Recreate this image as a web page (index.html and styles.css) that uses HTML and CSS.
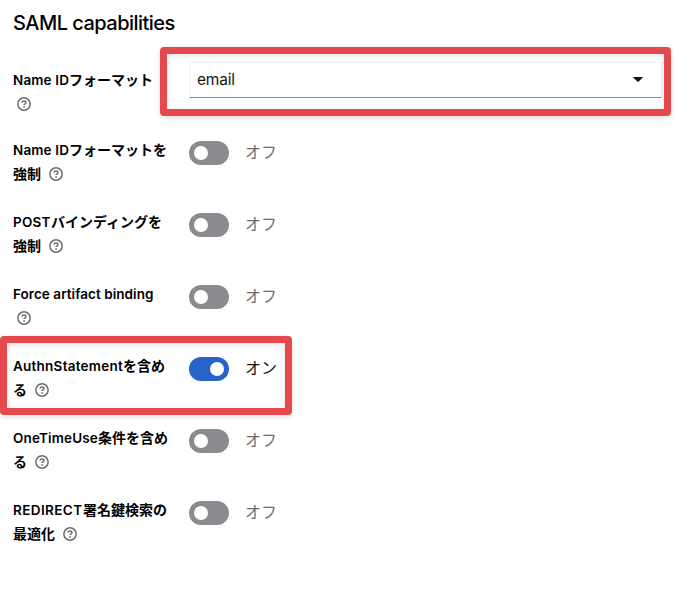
FILE: index.html
```html
<!DOCTYPE html>
<html lang="ja">
<head>
<meta charset="utf-8">
<title>SAML capabilities</title>
<link rel="stylesheet" href="styles.css">
</head>
<body>
<svg class="defs" aria-hidden="true">
  <symbol id="help" viewBox="0 0 14 14">
    <circle cx="7" cy="7" r="6.15" fill="none" stroke="currentColor" stroke-width="1.5"/>
    <path d="M4.9 5.6C5.1 4.4 6 4 7 4c1.2 0 2 .65 2 1.5 0 1.3-1.9 1.25-1.9 2.4" fill="none" stroke="currentColor" stroke-width="1.5"/>
    <circle cx="7.1" cy="9.9" r=".9" fill="currentColor"/>
  </symbol>
</svg>
<main class="form">
  <h1 class="title">SAML capabilities</h1>
  <div class="row row-select">
    <div class="label"><span class="latin w-name">Name ID</span>フォーマット<br><svg class="help lone"><use href="#help"/></svg></div>
    <div class="select"><span class="value">email</span><svg class="caret" viewBox="0 0 10 5"><path d="M.7 0h8.6q.9.1.3.8L5.7 4.6q-.7.6-1.4 0L.4.8Q-.2.1.7 0z"/></svg></div>
  </div>
  <div class="row">
    <div class="label"><span class="latin w-name">Name ID</span>フォーマットを<br>強制<svg class="help"><use href="#help"/></svg></div>
    <div class="switch"><span class="track"></span><span class="state">オフ</span></div>
  </div>
  <div class="row">
    <div class="label"><span class="latin w-post">POST</span>バインディングを<br>強制<svg class="help"><use href="#help"/></svg></div>
    <div class="switch"><span class="track"></span><span class="state">オフ</span></div>
  </div>
  <div class="row">
    <div class="label"><span class="latin w-force">Force artifact binding</span><br><svg class="help lone"><use href="#help"/></svg></div>
    <div class="switch"><span class="track"></span><span class="state">オフ</span></div>
  </div>
  <div class="row">
    <div class="label"><span class="latin w-authn">AuthnStatement</span>を含め<br>る<svg class="help"><use href="#help"/></svg></div>
    <div class="switch on"><span class="track"></span><span class="state">オン</span></div>
  </div>
  <div class="row">
    <div class="label"><span class="latin w-once">OneTimeUse</span>条件を含め<br>る<svg class="help"><use href="#help"/></svg></div>
    <div class="switch"><span class="track"></span><span class="state">オフ</span></div>
  </div>
  <div class="row">
    <div class="label"><span class="latin w-redirect">REDIRECT</span>署名鍵検索の<br>最適化<svg class="help"><use href="#help"/></svg></div>
    <div class="switch"><span class="track"></span><span class="state">オフ</span></div>
  </div>
</main>
<div class="mark mark-format"></div>
<div class="mark mark-authn"></div>
</body>
</html>
```
FILE: styles.css
```css
* { box-sizing: border-box; }
body {
  margin: 0;
  height: 605px;
  overflow: hidden;
  background: #fff;
  color: #151515;
  font-family: "Noto Sans CJK JP", sans-serif;
}
.defs { display: none; }
.form { padding: 8px 17px 0 13px; }
.title {
  margin: 0 0 24px;
  font: 500 20px/30px Inter, sans-serif;
  letter-spacing: -.53px;
  color: #000;
}
.row {
  display: grid;
  grid-template-columns: 176px 1fr;
  height: 72px;
}
.row-select { height: 76px; }
.row-select .label { padding-top: 6px; }
.label {
  margin-top: -1px;
  font-size: 14px;
  font-weight: 700;
  line-height: 24px;
  color: #000;
  white-space: nowrap;
}
.latin { display: inline-block; font-family: Inter, sans-serif; font-size: 13.5px; font-weight: 600; line-height: 20px; }
.w-name { width: 56px; letter-spacing: .15px; }
.w-post { width: 38px; letter-spacing: .2px; }
.w-force { letter-spacing: .05px; }
.w-authn { width: 110px; letter-spacing: .24px; }
.w-once { width: 85px; letter-spacing: .15px; }
.w-redirect { width: 70px; letter-spacing: .4px; }
.help { width: 14px; height: 14px; margin-left: 8px; color: #6a6e73; vertical-align: -2px; }
.help.lone { margin-left: 4px; }
.select {
  display: flex;
  align-items: center;
  justify-content: space-between;
  height: 36px;
  padding: 0 18px 0 7px;
  border: 1px solid #f0f0f0;
  border-bottom-color: #8a8d90;
}
.value { margin-top: -1px; font: 15.5px/24px Inter, sans-serif; letter-spacing: -.2px; }
.caret { width: 10px; height: 5px; margin-top: -1px; fill: #151515; }
.switch { display: flex; align-items: flex-start; gap: 16px; padding-top: 3px; }
.track { width: 40px; height: 24px; padding: 5px; border-radius: 12px; background: #8a8b8f; }
.track::before { content: ""; display: block; width: 14px; height: 14px; border-radius: 50%; background: #fff; }
.state { font-size: 16px; line-height: 24px; margin-top: -2px; color: #6a6e73; }
.on .track { background: #2864c7; }
.on .track::before { margin-left: 16px; }
.on .state { color: #151515; }
.mark {
  position: absolute;
  border: 7px solid #e5484d;
  border-radius: 4px;
  box-shadow: 0 2px 6px rgba(0,0,0,.12), inset 0 2px 6px rgba(0,0,0,.1);
}
.mark-format { left: 160px; top: 47px; width: 511px; height: 69px; }
.mark-authn { left: 0; top: 336px; width: 292px; height: 79px; }
```
